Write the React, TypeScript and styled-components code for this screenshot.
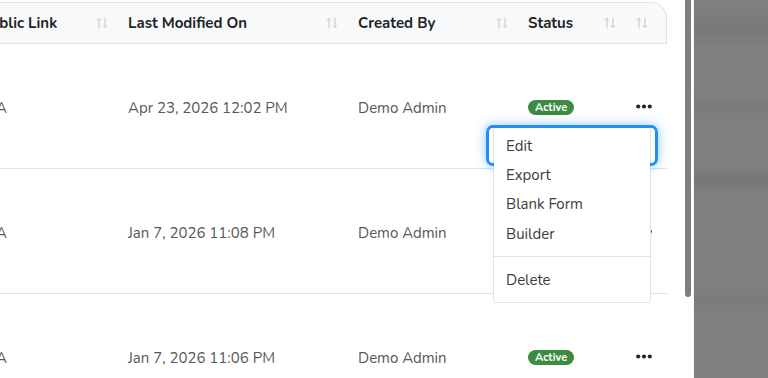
import { FC, useEffect, useRef } from 'react';
import styled, { createGlobalStyle } from 'styled-components';

const GlobalStyle = createGlobalStyle`
  html, body {
    margin: 0;
    padding: 0;
    background: #fff;
  }
  body {
    font-family: 'Nunito', 'Lato', 'Noto Sans', sans-serif;
  }
`;

const COLUMNS = '200px 147px 230px 170px 108px 46px';

const Screen = styled.div`
  display: flex;
  width: 768px;
  height: 378px;
  overflow: hidden;
`;

const Panel = styled.div`
  display: flex;
  width: 693px;
  flex-shrink: 0;
  background: #fff;
`;

const Scroller = styled.div`
  width: 667px;
  height: 378px;
  overflow-x: auto;
  overflow-y: hidden;
  scrollbar-width: none;
  &::-webkit-scrollbar {
    display: none;
  }
`;

const ScrollThumb = styled.div`
  width: 6px;
  height: 297px;
  margin-left: 18px;
  background: #7e7e7e;
  border-radius: 0 0 3px 3px;
`;

const Backdrop = styled.div`
  flex: 1;
  border-left: 1px solid #f4f4f4;
  background: linear-gradient(
    180deg,
    #808080 0,
    #797979 30px,
    #808080 48px,
    #808080 92px,
    #7a7a7a 106px,
    #808080 122px,
    #808080 165px,
    #767676 180px,
    #808080 196px,
    #808080 282px,
    #7b7b7b 298px,
    #808080 312px
  );
`;

const Table = styled.div`
  width: 901px;
  padding-top: 2px;
`;

const HeadRow = styled.div`
  display: grid;
  grid-template-columns: ${COLUMNS};
  height: 40px;
  background: #f8f9fa;
  border-top: 1px solid #dfe3e7;
  border-right: 1px solid #dfe3e7;
  border-bottom: 1px solid #dfe3e7;
  border-top-right-radius: 16px;
`;

const HeadCell = styled.div<{ $center?: boolean }>`
  display: flex;
  align-items: center;
  justify-content: ${p => (p.$center ? 'center' : 'space-between')};
  padding: 0 5px 1px ${p => (p.$center ? '0' : '15px')};
  font-size: 15px;
  font-weight: 700;
  color: #212427;
  white-space: nowrap;
`;

const Row = styled.div`
  display: grid;
  grid-template-columns: ${COLUMNS};
  height: 124px;
  border-bottom: 1px solid #dfe3e7;
`;

const Cell = styled.div`
  display: flex;
  align-items: center;
  padding: 3px 0 0 15px;
  font-size: 15px;
  color: #54585c;
  white-space: nowrap;
`;

const ActionCell = styled.div`
  position: relative;
  display: flex;
  align-items: center;
  justify-content: center;
`;

const Badge = styled.span`
  display: inline-flex;
  align-items: center;
  height: 15px;
  padding: 0 7px;
  border-radius: 8px;
  background: #3d8b40;
  color: #fff;
  font-size: 11px;
  font-weight: 700;
`;

const DotsButton = styled.button`
  display: flex;
  padding: 0;
  border: 0;
  background: none;
  cursor: pointer;
`;

const Menu = styled.div`
  position: absolute;
  top: 82px;
  right: 16px;
  z-index: 10;
  width: 156px;
  padding: 4px 0 8px;
  background: #fff;
  border: 1px solid #dfe3e7;
  border-radius: 4px;
`;

const MenuItem = styled.div<{ $focused?: boolean }>`
  position: relative;
  display: flex;
  align-items: center;
  height: 29.3px;
  padding-left: 12px;
  font-size: 15px;
  color: #3a3d40;
  background: #fff;

  ${p =>
    p.$focused &&
    `
    &::after {
      content: '';
      position: absolute;
      top: -6px;
      bottom: -6px;
      left: -8px;
      right: -8px;
      border: 3px solid #1f8ff5;
      border-radius: 7px;
      box-shadow: 0 0 10px 2px rgba(31, 143, 245, 0.35);
    }
  `}
`;

const Divider = styled.div`
  height: 1px;
  margin: 8px 0;
  background: #dfe3e7;
`;

const SortIcon: FC = () => (
  <svg width="12" height="14" viewBox="0 0 12 14" fill="none" stroke="#c3c7cb" strokeWidth="1">
    <path d="M3 2.5v10M1 4.5l2-2 2 2" />
    <path d="M9 1.5v10M7 9.5l2 2 2-2" />
  </svg>
);

const Dots: FC = () => (
  <DotsButton aria-label="Actions">
    <svg width="16" height="5" viewBox="0 0 16 5" fill="#25282b">
      <circle cx="2.2" cy="2.5" r="2.1" />
      <circle cx="8" cy="2.5" r="2.1" />
      <circle cx="13.8" cy="2.5" r="2.1" />
    </svg>
  </DotsButton>
);

const rows = [
  { name: 'Customer Feedback', link: 'N/A', modified: 'Apr 23, 2026 12:02 PM', by: 'Demo Admin', menu: true },
  { name: 'Event Registration', link: 'N/A', modified: 'Jan 7, 2026 11:08 PM', by: 'Demo Admin', menu: false },
  { name: 'Contact Us', link: 'N/A', modified: 'Jan 7, 2026 11:06 PM', by: 'Demo Admin', menu: false },
];

const headers = ['Form Name', 'Public Link', 'Last Modified On', 'Created By', 'Status'];

const App: FC = () => {
  const scroller = useRef<HTMLDivElement>(null);

  useEffect(() => {
    if (scroller.current) scroller.current.scrollLeft = scroller.current.scrollWidth;
  }, []);

  return (
    <>
      <GlobalStyle />
      <Screen>
        <Panel>
          <Scroller ref={scroller}>
            <Table>
              <HeadRow>
                {headers.map(h => (
                  <HeadCell key={h}>
                    <span>{h}</span>
                    <SortIcon />
                  </HeadCell>
                ))}
                <HeadCell $center>
                  <SortIcon />
                </HeadCell>
              </HeadRow>
              {rows.map(r => (
                <Row key={r.modified}>
                  <Cell>{r.name}</Cell>
                  <Cell>{r.link}</Cell>
                  <Cell>{r.modified}</Cell>
                  <Cell>{r.by}</Cell>
                  <Cell>
                    <Badge>Active</Badge>
                  </Cell>
                  <ActionCell>
                    <Dots />
                    {r.menu && (
                      <Menu>
                        <MenuItem $focused>Edit</MenuItem>
                        <MenuItem>Export</MenuItem>
                        <MenuItem>Blank Form</MenuItem>
                        <MenuItem>Builder</MenuItem>
                        <Divider />
                        <MenuItem>Delete</MenuItem>
                      </Menu>
                    )}
                  </ActionCell>
                </Row>
              ))}
            </Table>
          </Scroller>
          <ScrollThumb />
        </Panel>
        <Backdrop />
      </Screen>
    </>
  );
};

export default App;
